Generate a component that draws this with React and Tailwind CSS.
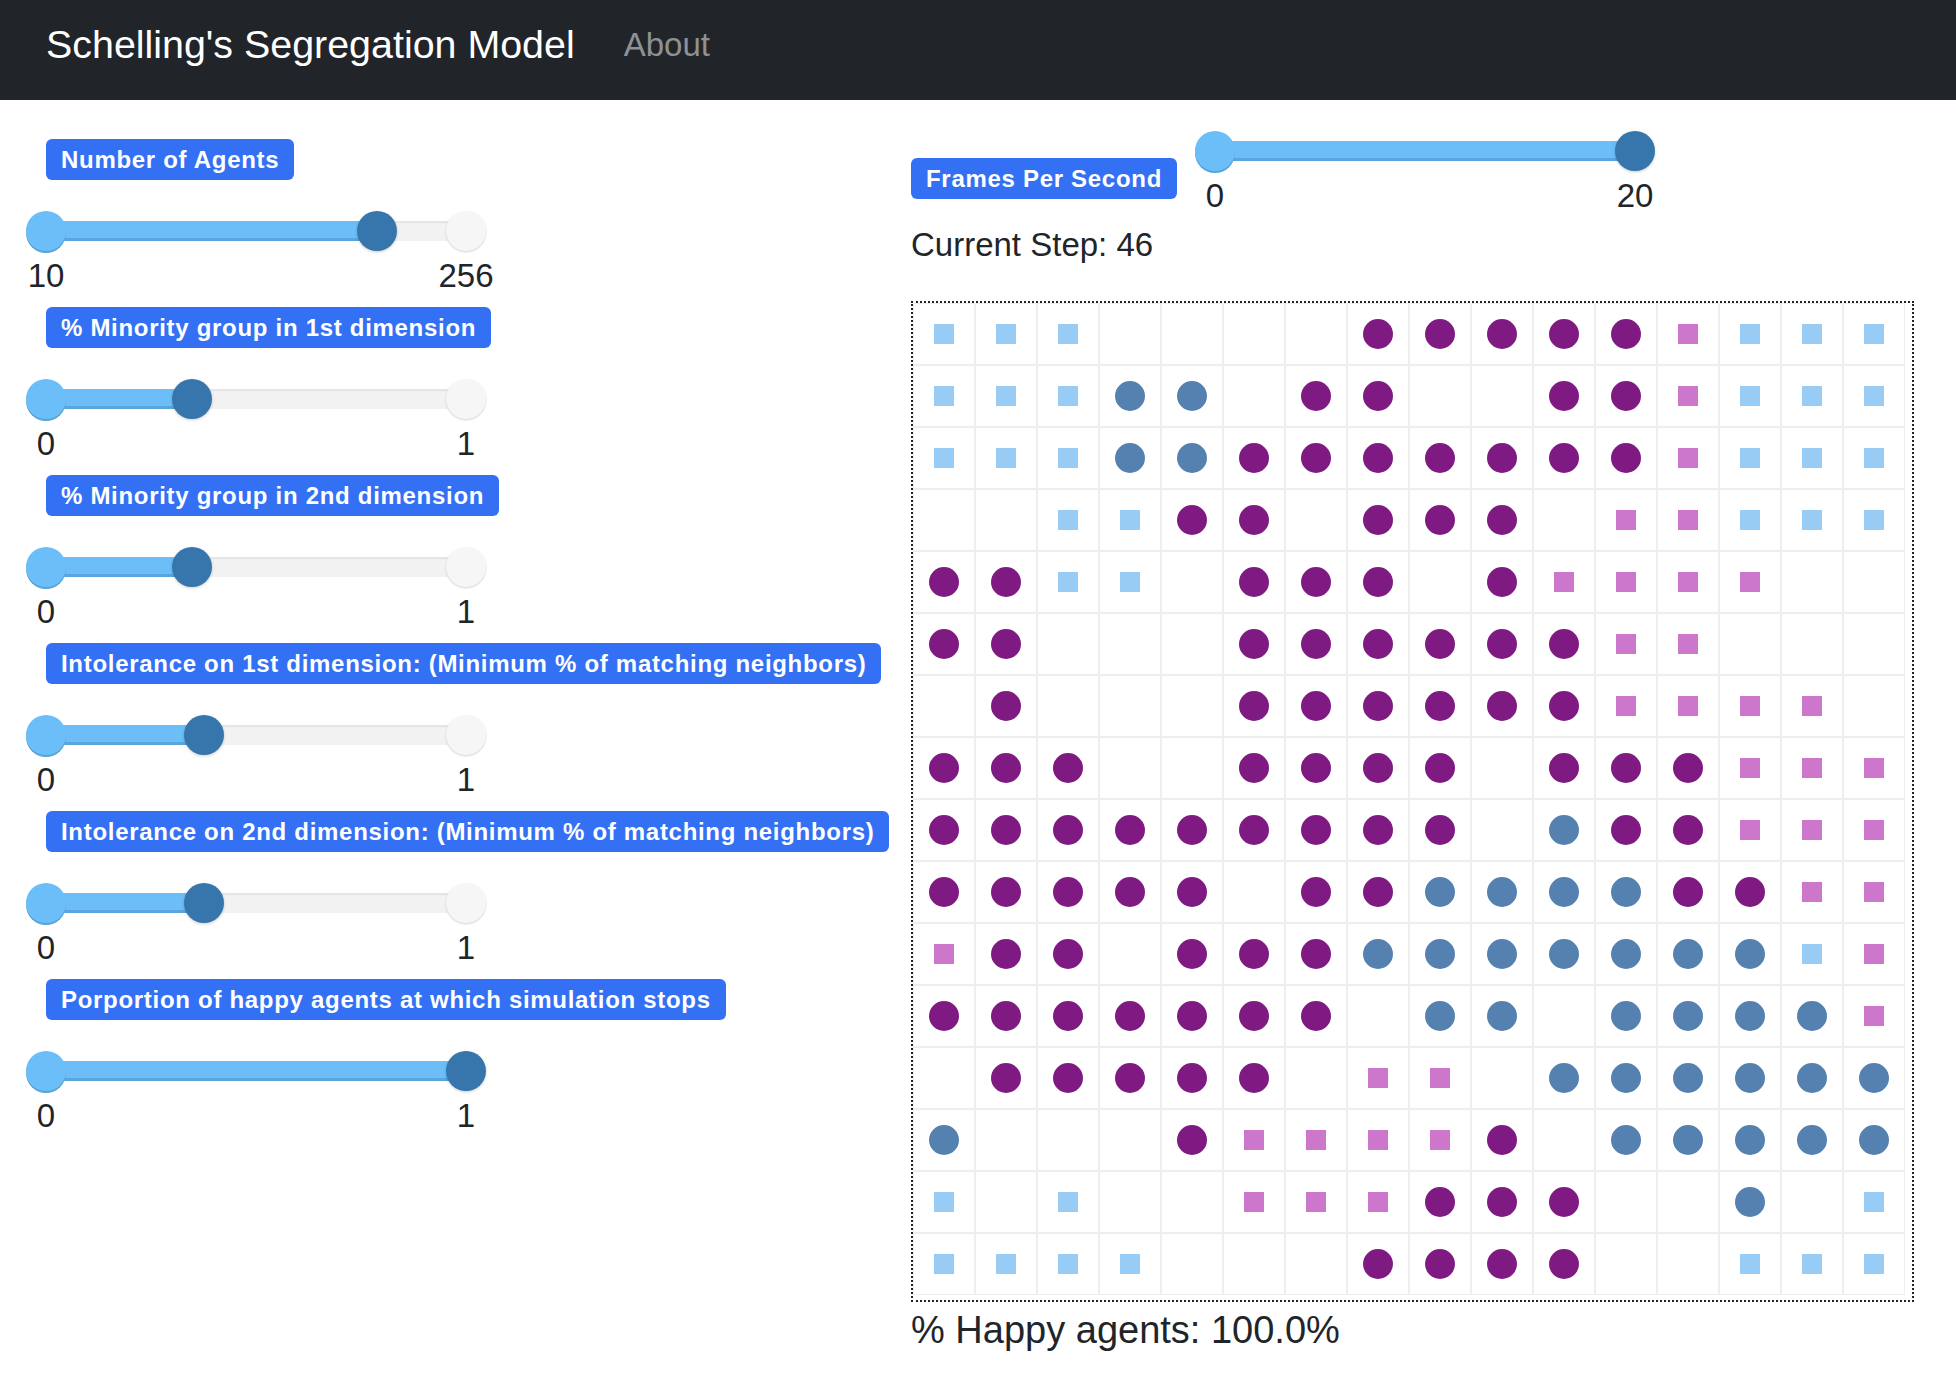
import React from 'react'

const rows = [
  "sss....PPPPPpsss",
  "sssBB.PP..PPpsss",
  "sssBBPPPPPPPpsss",
  "..ssPP.PPP.ppsss",
  "PPss.PPP.Ppppp..",
  "PP...PPPPPPpp...",
  ".P...PPPPPPpppp.",
  "PPP..PPPP.PPPppp",
  "PPPPPPPPP.BPPppp",
  "PPPPP.PPBBBBPPpp",
  "pPP.PPPBBBBBBBsp",
  "PPPPPPP.BB.BBBBp",
  ".PPPPP.pp.BBBBBB",
  "B...PppppP.BBBBB",
  "s.s..pppPPP..B.s",
  "ssss...PPPP..sss",
];

const Badge = ({ children, className = "" }) => (
  <div className={"self-start bg-[#3470f3] text-white font-bold text-[24px] tracking-[0.7px] leading-none px-[15px] py-[8.5px] rounded-[6px] whitespace-nowrap " + className}>
    {children}
  </div>
)

const Slider = ({ frac }) => {
  const pos = 20 + frac * 420;
  return (
    <div className="relative w-[460px] h-10">
      <div className="absolute left-5 right-5 top-[10px] h-5 bg-[#f2f2f2] shadow-[inset_0_2px_2px_rgba(0,0,0,0.06)]" />
      <div className="absolute left-5 top-[10px] h-5 bg-[#6bbef7] shadow-[inset_0_-3px_0_#5aa5dc]" style={{ width: pos - 20 }} />
      {frac < 1 && <div className="absolute right-0 top-0 w-10 h-10 rounded-full bg-[#f6f6f6] shadow-[0_1px_2px_rgba(0,0,0,0.18)]" />}
      <div className="absolute left-0 top-0 w-10 h-10 rounded-full bg-[#6bbef7] shadow-[0_2px_0_#58a3da]" />
      <div className="absolute top-0 w-10 h-10 rounded-full bg-[#3676ad] shadow-[0_1px_3px_rgba(0,0,0,0.2)]" style={{ left: pos - 20 }} />
    </div>
  )
}

const Labels = ({ min, max }) => (
  <div className="flex justify-between w-[460px] h-12 text-[33px] leading-[50px]">
    <span className="w-10 flex justify-center whitespace-nowrap">{min}</span>
    <span className="w-10 flex justify-center whitespace-nowrap">{max}</span>
  </div>
)

const Control = ({ label, frac, min, max }) => (
  <div className="flex flex-col mb-2">
    <Badge className="ml-5">{label}</Badge>
    <div className="mt-[31px]"><Slider frac={frac} /></div>
    <Labels min={min} max={max} />
  </div>
)

const Cell = ({ c }) => {
  let shape = null;
  if (c === 's') shape = <div className="w-5 h-5 bg-[#99ccf5]" />;
  if (c === 'p') shape = <div className="w-5 h-5 bg-[#cc77cc]" />;
  if (c === 'P') shape = <div className="w-[30px] h-[30px] rounded-full bg-[#7f1a83]" />;
  if (c === 'B') shape = <div className="w-[30px] h-[30px] rounded-full bg-[#5581b0]" />;
  return (
    <div className="w-[62px] h-[62px] border border-[#eeeeee] flex items-center justify-center">
      {shape}
    </div>
  )
}

const App = () => {
  return (
    <div className="min-h-screen bg-white text-[#212529] font-['Liberation_Sans',Arial,sans-serif]">
      <nav className="h-[100px] bg-[#212529] flex items-center pb-[10px] pl-[46px]">
        <span className="text-white text-[39.4px]">Schelling's Segregation Model</span>
        <span className="ml-[49px] text-[33px] text-[#8e9194]">About</span>
      </nav>

      <div className="flex">
        <div className="w-[911px] pl-[26px] pt-[39px] flex flex-col">
          <Control label="Number of Agents" frac={0.788} min="10" max="256" />
          <Control label="% Minority group in 1st dimension" frac={0.348} min="0" max="1" />
          <Control label="% Minority group in 2nd dimension" frac={0.348} min="0" max="1" />
          <Control label="Intolerance on 1st dimension: (Minimum % of matching neighbors)" frac={0.375} min="0" max="1" />
          <Control label="Intolerance on 2nd dimension: (Minimum % of matching neighbors)" frac={0.375} min="0" max="1" />
          <Control label="Porportion of happy agents at which simulation stops" frac={1} min="0" max="1" />
        </div>

        <div className="flex flex-col pt-[31px]">
          <div className="flex items-start">
            <Badge className="mt-[27px]">Frames Per Second</Badge>
            <div className="ml-[18px] flex flex-col">
              <Slider frac={1} />
              <Labels min="0" max="20" />
            </div>
          </div>
          <div className="h-[52px] text-[33px] leading-[52px]">Current Step: 46</div>
          <div className="mt-[30px] w-[1003px] h-[1001px] border-2 border-dotted border-[#222]">
            <div className="grid grid-cols-[repeat(16,62px)]">
              {rows.map((r, i) => r.split('').map((c, j) => <Cell key={i + '-' + j} c={c} />))}
            </div>
          </div>
          <div className="text-[38px] leading-[56px] font-light">% Happy agents: 100.0%</div>
        </div>
      </div>
    </div>
  )
}

export default App
